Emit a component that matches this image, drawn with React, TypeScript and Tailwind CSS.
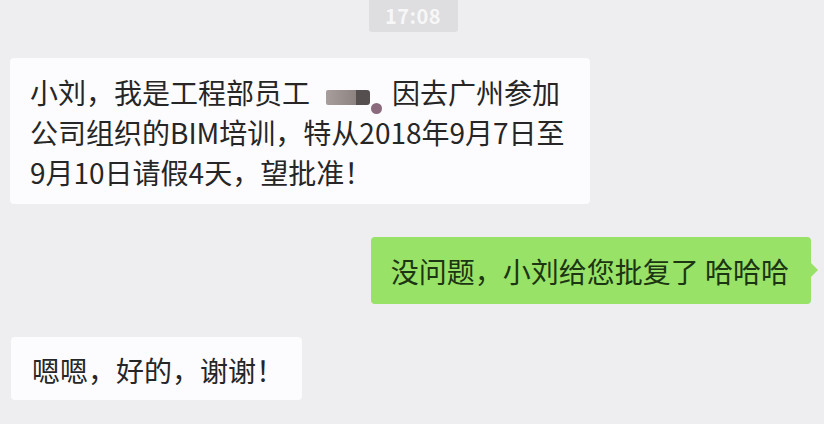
const font = { fontFamily: '"Noto Sans CJK SC", "Noto Sans", sans-serif' };

const App: React.FC = () => {
  return (
    <div
      className="w-[824px] h-[424px] overflow-hidden bg-[#eeedf0] flex flex-col"
      style={font}
    >
      <div className="flex justify-center pl-[2px]">
        <div className="w-[89px] h-[32px] bg-[#dedde0] rounded-b-[3px] flex items-center justify-center text-[20px] font-semibold text-[#f7f7f7] tracking-wide">
          17:08
        </div>
      </div>

      <div className="mt-[26px] ml-[10px] w-[580px] bg-[#fcfbfd] rounded-[4px] pl-[20px] pt-[14px] pb-[12px] text-[28px] leading-[40px] text-[#262626]">
        小刘，我是工程部员工
        <span className="relative inline-block w-[82px] h-[28px] align-[-3px]">
          <span className="absolute left-[16px] top-[11px] w-[31px] h-[15px] bg-gradient-to-r from-[#a89e9b] to-[#8c827f] rounded-l-[2px]" />
          <span className="absolute left-[46px] top-[11px] w-[14px] h-[15px] bg-[#55504f] rounded-r-[3px]" />
          <span className="absolute left-[61px] top-[24px] w-[11px] h-[11px] bg-[#8a6a7c] rounded-full" />
        </span>
        因去广州参加
        <br />
        公司组织的BIM培训，特从2018年9月7日至
        <br />
        9月10日请假4天，望批准！
      </div>

      <div className="mt-[33px] flex justify-end pr-[13px]">
        <div className="relative bg-[#98e267] rounded-[4px] pl-[20px] pr-[22px] pt-[14px] pb-[13px] text-[28px] leading-[40px] text-[#1c3512]">
          没问题，小刘给您批复了 哈哈哈
          <span className="absolute right-[-7px] top-[26px] w-0 h-0 border-y-[7px] border-y-transparent border-l-[7px] border-l-[#98e267]" />
        </div>
      </div>

      <div className="mt-[33px] ml-[11px] self-start bg-[#fcfbfd] rounded-[4px] pl-[21px] pr-[18px] pt-[13px] pb-[10px] text-[28px] leading-[40px] text-[#262626]">
        嗯嗯，好的，谢谢！
      </div>
    </div>
  );
};

export default App;
